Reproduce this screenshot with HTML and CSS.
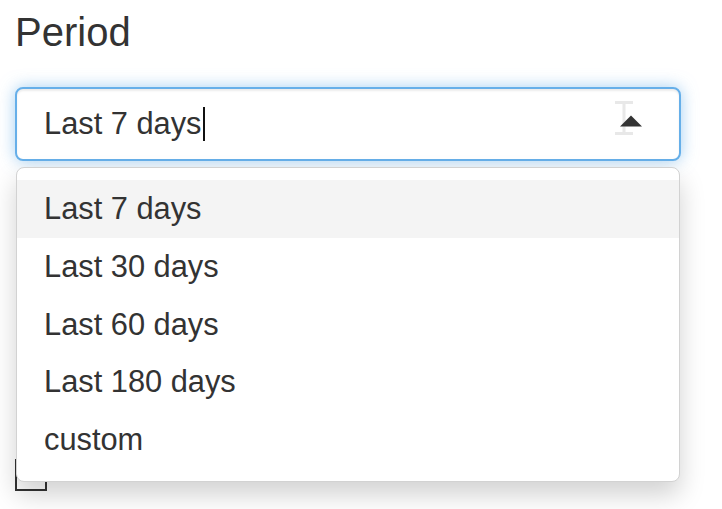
FILE: index.html
```html
<!DOCTYPE html>
<html>
<head>
<meta charset="utf-8">
<link rel="stylesheet" href="styles.css">
</head>
<body>
<div class="page">
  <h3 class="title">Period</h3>
  <div class="select-wrap">
    <div class="select">
      <span class="value">Last 7 days</span><span class="caret-cursor"></span>
      <svg class="ibeam" width="20" height="34" viewBox="0 0 20 34"><path d="M1 1.5h18M1 32.5h18M10 1v32" stroke="#e8e8e8" stroke-width="3" fill="none"/></svg>
      <svg class="arrow" width="22" height="12" viewBox="0 0 22 12"><path d="M0 11.5 L11 0.5 L22 11.5 Z" fill="#333"/></svg>
    </div>
    <ul class="menu">
      <li class="item active">Last 7 days</li>
      <li class="item">Last 30 days</li>
      <li class="item">Last 60 days</li>
      <li class="item">Last 180 days</li>
      <li class="item">custom</li>
    </ul>
  </div>
  <div class="check"></div>
</div>
</body>
</html>
```
FILE: styles.css
```css
html, body {
  margin: 0;
  padding: 0;
  background: #fff;
  height: 509px;
}
body {
  font-family: "Liberation Sans", Arial, sans-serif;
  color: #333;
  overflow: hidden;
}
.page {
  padding: 8px 15px 0 15px;
  width: 666px;
  min-height: 501px;
}
.title {
  margin: 0;
  font-size: 40px;
  font-weight: normal;
  line-height: 48px;
  color: #333;
}
.select-wrap {
  position: relative;
  margin-top: 31px;
}
.select {
  position: relative;
  height: 70px;
  border: 2px solid #66afe9;
  border-radius: 8px;
  box-shadow: inset 0 2px 2px rgba(0,0,0,.075), 0 0 16px rgba(102,175,233,.6);
  display: flex;
  align-items: center;
  padding-left: 27px;
  font-size: 30.8px;
  background: #fff;
}
.value {
  line-height: 36px;
}
.caret-cursor {
  display: inline-block;
  width: 2px;
  height: 34px;
  background: #111;
  margin-left: 1px;
}
.ibeam {
  position: absolute;
  left: 597px;
  top: 12px;
}
.arrow {
  position: absolute;
  left: 603px;
  top: 26px;
}
.menu {
  position: absolute;
  left: 1px;
  right: 1px;
  top: 80px;
  margin: 0;
  padding: 12px 0 12px 0;
  list-style: none;
  background: #fff;
  border: 1px solid #d2d2d2;
  border-radius: 8px;
  box-shadow: 0 13px 26px rgba(0,0,0,.18);
  z-index: 2;
}
.item {
  height: 57.75px;
  line-height: 57.75px;
  padding-left: 27px;
  font-size: 30.8px;
  color: #333;
}
.item.active {
  background: #f4f4f4;
}
.check {
  margin-top: 298px;
  width: 28px;
  height: 28px;
  border: 2px solid #333;
}
```
